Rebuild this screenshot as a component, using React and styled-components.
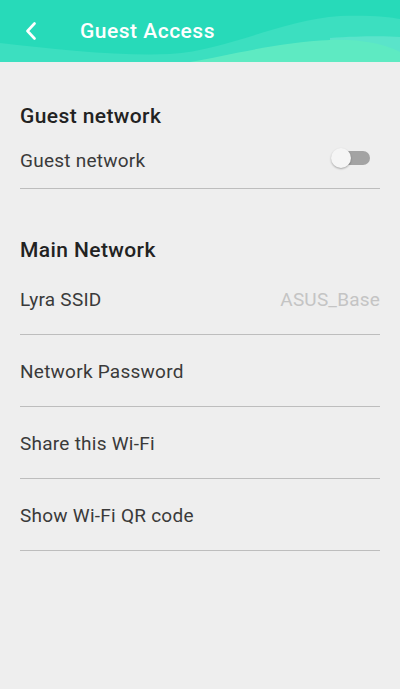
import styled, { createGlobalStyle } from "styled-components";

const GlobalStyle = createGlobalStyle`
  html, body {
    margin: 0;
    padding: 0;
    background: #eeeeee;
    font-family: Roboto, "Noto Sans", sans-serif;
  }
`;

const Page = styled.div`
  width: 400px;
  min-height: 689px;
  background: #eeeeee;
`;

const Header = styled.header`
  position: relative;
  height: 62px;
  background: #27dab9;
  overflow: hidden;
  display: flex;
  align-items: center;
`;

const Waves = styled.svg`
  position: absolute;
  inset: 0;
  width: 100%;
  height: 100%;
`;

const HeaderBar = styled.div`
  position: relative;
  display: flex;
  align-items: center;
  width: 100%;
  height: 100%;
`;

const BackButton = styled.button`
  width: 62px;
  height: 62px;
  border: 0;
  padding: 0;
  background: transparent;
  display: flex;
  align-items: center;
  justify-content: center;
`;

const Title = styled.h1`
  margin: 0 0 0 18px;
  color: #ffffff;
  font-size: 21px;
  font-weight: 500;
  letter-spacing: 0.5px;
`;

const Content = styled.main`
  padding: 0 20px;
`;

const Section = styled.section`
  display: flex;
  flex-direction: column;
  padding-top: ${(p) => p.$top}px;
`;

const SectionTitle = styled.h2`
  margin: 0 0 ${(p) => p.$gap}px;
  height: 24px;
  line-height: 24px;
  font-size: 21px;
  font-weight: 500;
  letter-spacing: 0.4px;
  color: #222222;
`;

const Row = styled.div`
  display: flex;
  align-items: center;
  justify-content: space-between;
  height: ${(p) => p.$height}px;
  border-bottom: 1px solid #bdbdbd;
  padding-top: ${(p) => p.$pad || 0}px;
  box-sizing: border-box;
`;

const Label = styled.span`
  font-size: 19px;
  letter-spacing: 0.25px;
  color: #3a3a3a;
`;

const Value = styled.span`
  font-size: 19px;
  letter-spacing: 0.2px;
  color: #c4c4c4;
`;

const Switch = styled.div`
  position: relative;
  width: 38px;
  height: 14px;
  border-radius: 7px;
  background: #a3a3a3;
  margin-right: 10px;
  margin-bottom: 4px;
`;

const Knob = styled.div`
  position: absolute;
  left: -1px;
  top: -3px;
  width: 20px;
  height: 20px;
  border-radius: 50%;
  background: #f5f5f5;
  box-shadow: 0 1px 2px rgba(0, 0, 0, 0.3);
`;

export default function App() {
  return (
    <Page>
      <GlobalStyle />
      <Header>
        <Waves viewBox="0 0 400 62" preserveAspectRatio="none">
          <path
            d="M0 43 C 60 50, 120 56, 170 54 C 230 50, 280 20, 340 16 C 370 15, 390 17, 400 19 L 400 62 L 0 62 Z"
            fill="#3cdfc0"
          />
          <path
            d="M330 38 C 360 36, 385 36, 400 37 L 400 62 L 330 62 Z"
            fill="#5ae4ca"
          />
          <path
            d="M190 62 C 230 55, 280 42, 330 40 C 360 39, 385 44, 400 52 L 400 62 Z"
            fill="#5eeac2"
          />
        </Waves>
        <HeaderBar>
          <BackButton aria-label="Back">
            <svg width="12" height="18" viewBox="0 0 12 18">
              <path
                d="M9.5 1.5 L2.5 9 L9.5 16.5"
                fill="none"
                stroke="#ffffff"
                strokeWidth="2.6"
                strokeLinecap="round"
                strokeLinejoin="round"
              />
            </svg>
          </BackButton>
          <Title>Guest Access</Title>
        </HeaderBar>
      </Header>
      <Content>
        <Section $top={42}>
          <SectionTitle $gap={4}>Guest network</SectionTitle>
          <Row $height={57}>
            <Label>Guest network</Label>
            <Switch>
              <Knob />
            </Switch>
          </Row>
        </Section>
        <Section $top={49}>
          <SectionTitle $gap={1}>Main Network</SectionTitle>
          <Row $height={72} $pad={2}>
            <Label>Lyra SSID</Label>
            <Value>ASUS_Base</Value>
          </Row>
          <Row $height={72} $pad={2}>
            <Label>Network Password</Label>
          </Row>
          <Row $height={72} $pad={2}>
            <Label>Share this Wi-Fi</Label>
          </Row>
          <Row $height={72} $pad={2}>
            <Label>Show Wi-Fi QR code</Label>
          </Row>
        </Section>
      </Content>
    </Page>
  );
}
